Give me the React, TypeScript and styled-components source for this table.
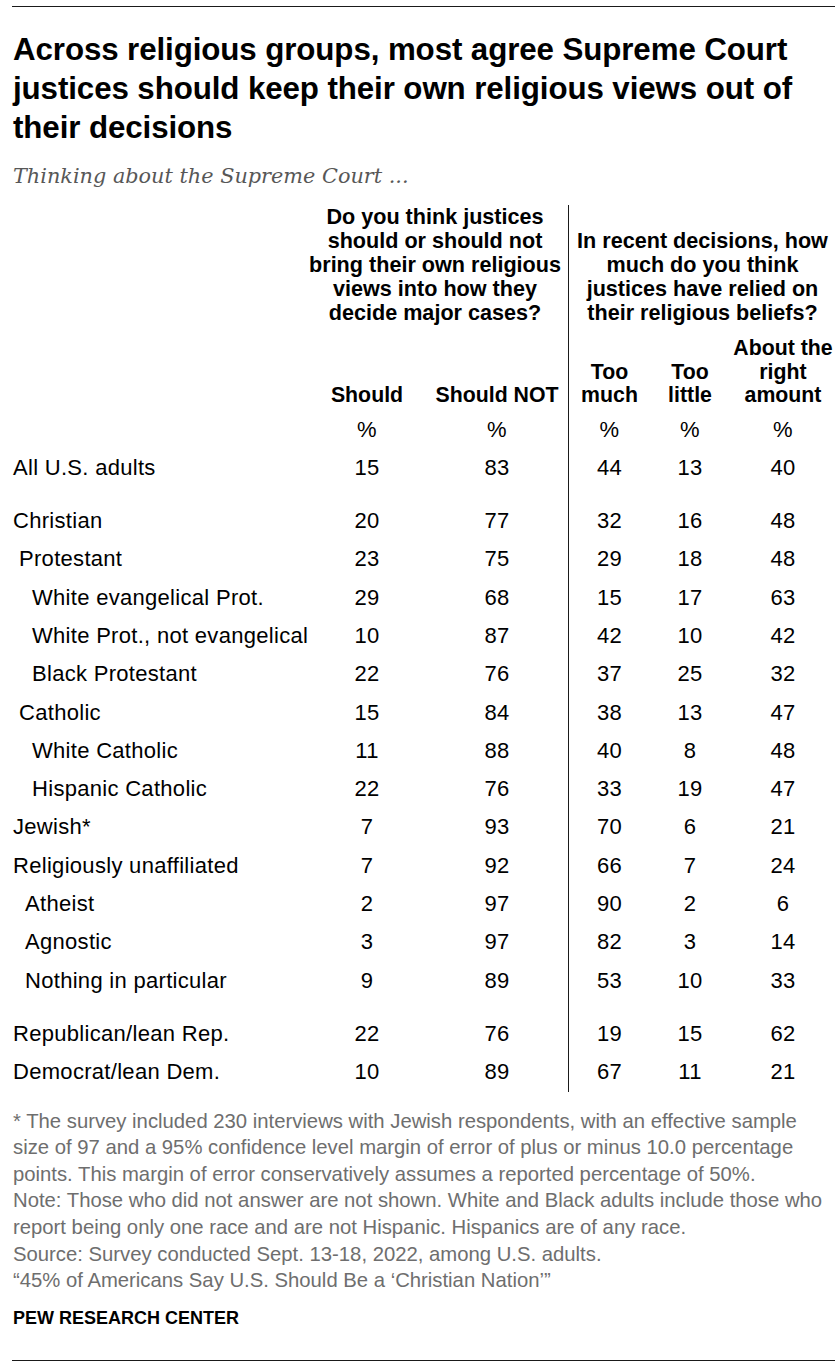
import React from "react";
import styled, { createGlobalStyle } from "styled-components";

const GlobalStyle = createGlobalStyle`
  html, body { margin: 0; padding: 0; background: #ffffff; }
  body { font-family: "Liberation Sans", Arial, sans-serif; color: #000; }
`;

const COLS = "314px 80px 161px 82px 80px 106px";

const Page = styled.div`
  width: 840px;
  box-sizing: border-box;
  padding: 6px 5px 5px 12px;
`;

const Rule = styled.hr<{ $top?: number }>`
  margin: ${(p) => p.$top ?? 0}px 0 0 0;
  border: 0;
  height: 1px;
  background: #1a1a1a;
`;

const Title = styled.h1`
  margin: 23px 0 0 1px;
  font-family: "Liberation Sans", Arial, sans-serif;
  font-weight: 700;
  font-size: 31.3px;
  line-height: 39px;
  letter-spacing: -0.1px;
  color: #000;
`;

const Subtitle = styled.p`
  margin: 16px 0 0 1px;
  font-family: "DejaVu Serif", Georgia, serif;
  font-style: italic;
  font-size: 20.8px;
  line-height: 26px;
  color: #575757;
`;

const Table = styled.div`
  margin-top: 16px;
  margin-left: 1px;
  display: flex;
  flex-direction: column;
`;

const Row = styled.div`
  display: grid;
  grid-template-columns: ${COLS};
  align-items: stretch;
`;

const Question = styled.div<{ $divider?: boolean }>`
  display: flex;
  align-items: flex-end;
  justify-content: center;
  text-align: center;
  font-weight: 700;
  font-size: 21.6px;
  line-height: 24px;
  white-space: nowrap;
  ${(p) =>
    p.$divider
      ? `grid-column: 4 / 7; border-left: 1px solid #1a1a1a; padding-top: 2px;`
      : `grid-column: 1 / 4; justify-self: end; width: 262px; margin-right: 2px;`}
`;

const HeadCell = styled.div<{ $col: number; $divider?: boolean; $pad?: number }>`
  grid-column: ${(p) => p.$col};
  display: flex;
  align-items: flex-end;
  justify-content: center;
  text-align: center;
  font-weight: 700;
  font-size: 21.3px;
  line-height: 23.5px;
  white-space: nowrap;
  padding-top: ${(p) => (p.$col === 1 ? 0 : 12)}px;
  padding-left: ${(p) => p.$pad ?? 0}px;
  padding-bottom: 3px;
  border-left: ${(p) => (p.$divider ? "1px solid #1a1a1a" : "0")};
`;

const Cell = styled.div<{ $divider?: boolean; $pad?: number; $spaced?: boolean }>`
  display: flex;
  align-items: flex-end;
  justify-content: center;
  font-size: 22px;
  letter-spacing: 0.3px;
  line-height: 38.3px;
  padding-top: ${(p) => (p.$spaced ? 15 : 0)}px;
  padding-left: ${(p) => p.$pad ?? 0}px;
  border-left: ${(p) => (p.$divider ? "1px solid #1a1a1a" : "0")};
`;

const Label = styled(Cell)<{ $indent: number }>`
  justify-content: flex-start;
  padding-left: ${(p) => p.$indent}px;
  white-space: nowrap;
`;

const Notes = styled.div`
  margin-top: 16px;
  margin-left: 1px;
  font-family: "Liberation Sans", Arial, sans-serif;
  font-size: 20.3px;
  line-height: 26.6px;
  color: #6e6e6e;
`;

const Note = styled.p`
  margin: 0;
  white-space: nowrap;
`;

const Brand = styled.div`
  margin: 13px 0 0 1px;
  font-family: "Liberation Sans Narrow", "Liberation Sans", Arial, sans-serif;
  font-weight: 700;
  font-size: 18px;
  line-height: 22px;
  color: #000;
`;

type Item = { label: string; indent: number; v: number[]; spaced?: boolean };

const rows: Item[] = [
  { label: "All U.S. adults", indent: 0, v: [15, 83, 44, 13, 40] },
  { label: "Christian", indent: 0, v: [20, 77, 32, 16, 48], spaced: true },
  { label: "Protestant", indent: 6, v: [23, 75, 29, 18, 48] },
  { label: "White evangelical Prot.", indent: 19, v: [29, 68, 15, 17, 63] },
  { label: "White Prot., not evangelical", indent: 19, v: [10, 87, 42, 10, 42] },
  { label: "Black Protestant", indent: 19, v: [22, 76, 37, 25, 32] },
  { label: "Catholic", indent: 6, v: [15, 84, 38, 13, 47] },
  { label: "White Catholic", indent: 19, v: [11, 88, 40, 8, 48] },
  { label: "Hispanic Catholic", indent: 19, v: [22, 76, 33, 19, 47] },
  { label: "Jewish*", indent: 0, v: [7, 93, 70, 6, 21] },
  { label: "Religiously unaffiliated", indent: 0, v: [7, 92, 66, 7, 24] },
  { label: "Atheist", indent: 12, v: [2, 97, 90, 2, 6] },
  { label: "Agnostic", indent: 12, v: [3, 97, 82, 3, 14] },
  { label: "Nothing in particular", indent: 12, v: [9, 89, 53, 10, 33] },
  { label: "Republican/lean Rep.", indent: 0, v: [22, 76, 19, 15, 62], spaced: true },
  { label: "Democrat/lean Dem.", indent: 0, v: [10, 89, 67, 11, 21] },
];

const pads = [0, 0, 19, 0, 0, 0];
const dividers = [false, false, false, true, false, false];

export default function App() {
  return (
    <Page>
      <GlobalStyle />
      <Rule />
      <Title>
        Across religious groups, most agree Supreme Court
        <br />
        justices should keep their own religious views out of
        <br />
        their decisions
      </Title>
      <Subtitle>Thinking about the Supreme Court ...</Subtitle>
      <Table>
        <Row>
          <Question>
            Do you think justices
            <br />
            should or should not
            <br />
            bring their own religious
            <br />
            views into how they
            <br />
            decide major cases?
          </Question>
          <Question $divider>
            In recent decisions, how
            <br />
            much do you think
            <br />
            justices have relied on
            <br />
            their religious beliefs?
          </Question>
        </Row>
        <Row>
          <HeadCell $col={1} />
          <HeadCell $col={2}>Should</HeadCell>
          <HeadCell $col={3} $pad={19}>Should NOT</HeadCell>
          <HeadCell $col={4} $divider>
            Too
            <br />
            much
          </HeadCell>
          <HeadCell $col={5}>
            Too
            <br />
            little
          </HeadCell>
          <HeadCell $col={6}>
            About the
            <br />
            right
            <br />
            amount
          </HeadCell>
        </Row>
        <Row>
          <Cell />
          {[1, 2, 3, 4, 5].map((i) => (
            <Cell key={i} $pad={pads[i]} $divider={dividers[i]}>
              %
            </Cell>
          ))}
        </Row>
        {rows.map((r) => (
          <Row key={r.label}>
            <Label $indent={r.indent} $spaced={r.spaced}>
              {r.label}
            </Label>
            {r.v.map((n, i) => (
              <Cell key={i} $spaced={r.spaced} $pad={pads[i + 1]} $divider={dividers[i + 1]}>
                {n}
              </Cell>
            ))}
          </Row>
        ))}
      </Table>
      <Notes>
        <Note>
          * The survey included 230 interviews with Jewish respondents, with an effective sample
          <br />
          size of 97 and a 95% confidence level margin of error of plus or minus 10.0 percentage
          <br />
          points. This margin of error conservatively assumes a reported percentage of 50%.
        </Note>
        <Note>
          Note: Those who did not answer are not shown. White and Black adults include those who
          <br />
          report being only one race and are not Hispanic. Hispanics are of any race.
        </Note>
        <Note>Source: Survey conducted Sept. 13-18, 2022, among U.S. adults.</Note>
        <Note>“45% of Americans Say U.S. Should Be a ‘Christian Nation’”</Note>
      </Notes>
      <Brand>PEW RESEARCH CENTER</Brand>
      <Rule $top={31} />
    </Page>
  );
}
